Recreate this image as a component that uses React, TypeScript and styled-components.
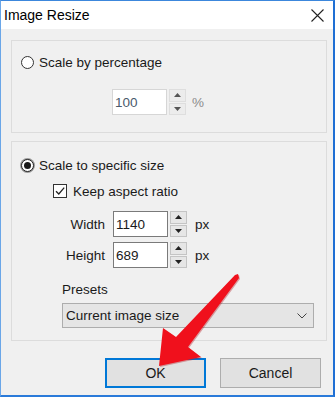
import React from "react";
import styled, { createGlobalStyle } from "styled-components";

const Global = createGlobalStyle`
  html, body {
    margin: 0;
    padding: 0;
    background: #ffffff;
  }
  * {
    box-sizing: border-box;
  }
`;

const Window = styled.div`
  position: relative;
  width: 335px;
  height: 397px;
  border-top: 1px solid #3c87dc;
  border-left: 1px solid #6aa6e8;
  border-right: 2px solid #1f6fd4;
  border-bottom: 2px solid #2a7ad9;
  background: #f0f0f0;
  font-family: "Segoe UI", "Liberation Sans", Arial, sans-serif;
  font-size: 13.5px;
  color: #1a1a1a;
  display: flex;
  flex-direction: column;
  overflow: hidden;
`;

const TitleBar = styled.div`
  height: 28px;
  background: #ffffff;
  display: flex;
  align-items: center;
  justify-content: space-between;
  padding: 0 9px 0 3px;
  font-size: 14px;
  color: #000;
`;

const CloseX = styled.div`
  width: 14px;
  height: 14px;
  display: flex;
  align-items: center;
  justify-content: center;
`;

const Body = styled.div`
  flex: 1;
  padding: 11px 6px 0 10px;
  display: flex;
  flex-direction: column;
`;

const Group = styled.div<{ $pt: number; $pb: number }>`
  border: 1px solid #dcdcdc;
  padding: ${(p) => p.$pt}px 0 ${(p) => p.$pb}px 9px;
  display: flex;
  flex-direction: column;
  & + & {
    margin-top: 8px;
  }
`;

const OptionRow = styled.label`
  height: 20px;
  display: flex;
  align-items: center;
  gap: 5px;
`;

const Radio = styled.span<{ $on?: boolean }>`
  width: 13px;
  height: 13px;
  border-radius: 50%;
  border: 1px solid ${(p) => (p.$on ? "#222" : "#333")};
  background: #fff;
  display: flex;
  align-items: center;
  justify-content: center;
  box-shadow: ${(p) => (p.$on ? "0 0 0 1px #9a9a9a" : "none")};
  &::after {
    content: "";
    width: 7px;
    height: 7px;
    border-radius: 50%;
    background: #1a1a1a;
    display: ${(p) => (p.$on ? "block" : "none")};
  }
`;

const CheckRow = styled.label`
  height: 18px;
  margin: 7px 0 0 32px;
  display: flex;
  align-items: center;
  gap: 6px;
`;

const CheckBox = styled.span`
  width: 14px;
  height: 14px;
  border: 1px solid #333;
  background: #fff;
  display: flex;
  align-items: center;
  justify-content: center;
`;

const SpinRow = styled.div<{ $mt: number; $ml: number }>`
  display: flex;
  align-items: center;
  margin-top: ${(p) => p.$mt}px;
  margin-left: ${(p) => p.$ml}px;
`;

const FieldLabel = styled.span`
  width: 84px;
  text-align: right;
  margin-right: 8px;
`;

const Input = styled.div<{ $disabled?: boolean }>`
  width: 55px;
  height: 26px;
  background: #fff;
  border: 1px solid ${(p) => (p.$disabled ? "#d6d6d6" : "#7a7a7a")};
  color: ${(p) => (p.$disabled ? "#4a5a6c" : "#1a1a1a")};
  padding-left: 2px;
  display: flex;
  align-items: center;
`;

const Spinner = styled.div`
  width: 17px;
  height: 26px;
  margin-left: 2px;
  display: flex;
  flex-direction: column;
  gap: 1px;
`;

const SpinBtn = styled.div<{ $disabled?: boolean }>`
  flex: 1;
  background: ${(p) => (p.$disabled ? "#ececec" : "#e6e6e6")};
  border: 1px solid ${(p) => (p.$disabled ? "#dedede" : "#c4c4c4")};
  display: flex;
  align-items: center;
  justify-content: center;
`;

const Unit = styled.span<{ $disabled?: boolean }>`
  margin-left: ${(p) => (p.$disabled ? 6 : 8)}px;
  color: ${(p) => (p.$disabled ? "#8c8c8c" : "#1a1a1a")};
`;

const PresetLabel = styled.div`
  margin: 14px 0 5px 41px;
  line-height: 16px;
`;

const Select = styled.div`
  margin-left: 41px;
  width: 252px;
  height: 25px;
  background: #e5e5e5;
  border: 1px solid #adadad;
  display: flex;
  align-items: center;
  justify-content: space-between;
  padding: 0 6px 0 3px;
`;

const Buttons = styled.div`
  display: flex;
  justify-content: flex-end;
  gap: 14px;
  margin-top: 17px;
  padding-right: 6px;
`;

const Button = styled.div<{ $primary?: boolean }>`
  width: 101px;
  height: 30px;
  background: #e1e1e1;
  border: ${(p) => (p.$primary ? "2px solid #0078d7" : "1px solid #adadad")};
  display: flex;
  align-items: center;
  justify-content: center;
  font-size: 14px;
`;

const Overlay = styled.svg`
  position: absolute;
  left: -1px;
  top: -1px;
  pointer-events: none;
`;

const Tri = ({ up, color }: { up?: boolean; color: string }) => (
  <svg width="7" height="4" viewBox="0 0 7 4">
    <polygon points={up ? "0,4 3.5,0 7,4" : "0,0 3.5,4 7,0"} fill={color} />
  </svg>
);

const SpinBox = ({ value, disabled }: { value: string; disabled?: boolean }) => (
  <>
    <Input $disabled={disabled}>{value}</Input>
    <Spinner>
      <SpinBtn $disabled={disabled}>
        <Tri up color={disabled ? "#555" : "#222"} />
      </SpinBtn>
      <SpinBtn $disabled={disabled}>
        <Tri color={disabled ? "#555" : "#222"} />
      </SpinBtn>
    </Spinner>
  </>
);

const arrow = "159,366 163,328 176,337 235,275 238,274 239,278 188,347 201,357";

export default function App() {
  return (
    <>
      <Global />
      <Window>
        <TitleBar>
          <span>Image Resize</span>
          <CloseX>
            <svg width="13" height="13" viewBox="0 0 13 13">
              <path d="M0.5 0.5 L12.5 12.5 M12.5 0.5 L0.5 12.5" stroke="#222" strokeWidth="1.1" />
            </svg>
          </CloseX>
        </TitleBar>
        <Body>
          <Group $pt={11} $pb={17}>
            <OptionRow>
              <Radio />
              Scale by percentage
            </OptionRow>
            <SpinRow $mt={17} $ml={91}>
              <SpinBox value="100" disabled />
              <Unit $disabled>%</Unit>
            </SpinRow>
          </Group>
          <Group $pt={13} $pb={12}>
            <OptionRow>
              <Radio $on />
              Scale to specific size
            </OptionRow>
            <CheckRow>
              <CheckBox>
                <svg width="12" height="12" viewBox="0 0 12 12">
                  <path d="M2 6.2 L4.8 9 L10.2 2.6" fill="none" stroke="#222" strokeWidth="1.3" />
                </svg>
              </CheckBox>
              Keep aspect ratio
            </CheckRow>
            <SpinRow $mt={11} $ml={0}>
              <FieldLabel>Width</FieldLabel>
              <SpinBox value="1140" />
              <Unit>px</Unit>
            </SpinRow>
            <SpinRow $mt={5} $ml={0}>
              <FieldLabel>Height</FieldLabel>
              <SpinBox value="689" />
              <Unit>px</Unit>
            </SpinRow>
            <PresetLabel>Presets</PresetLabel>
            <Select>
              <span>Current image size</span>
              <svg width="10" height="6" viewBox="0 0 10 6">
                <path d="M0.5 0.5 L5 5 L9.5 0.5" fill="none" stroke="#444" strokeWidth="1" />
              </svg>
            </Select>
          </Group>
          <Buttons>
            <Button $primary>OK</Button>
            <Button>Cancel</Button>
          </Buttons>
        </Body>
        <Overlay width="336" height="397" viewBox="0 0 336 397">
          <polygon points={arrow} fill="#b00a10" transform="translate(1,1)" opacity="0.35" />
          <polygon points={arrow} fill="#f0101c" />
        </Overlay>
      </Window>
    </>
  );
}
